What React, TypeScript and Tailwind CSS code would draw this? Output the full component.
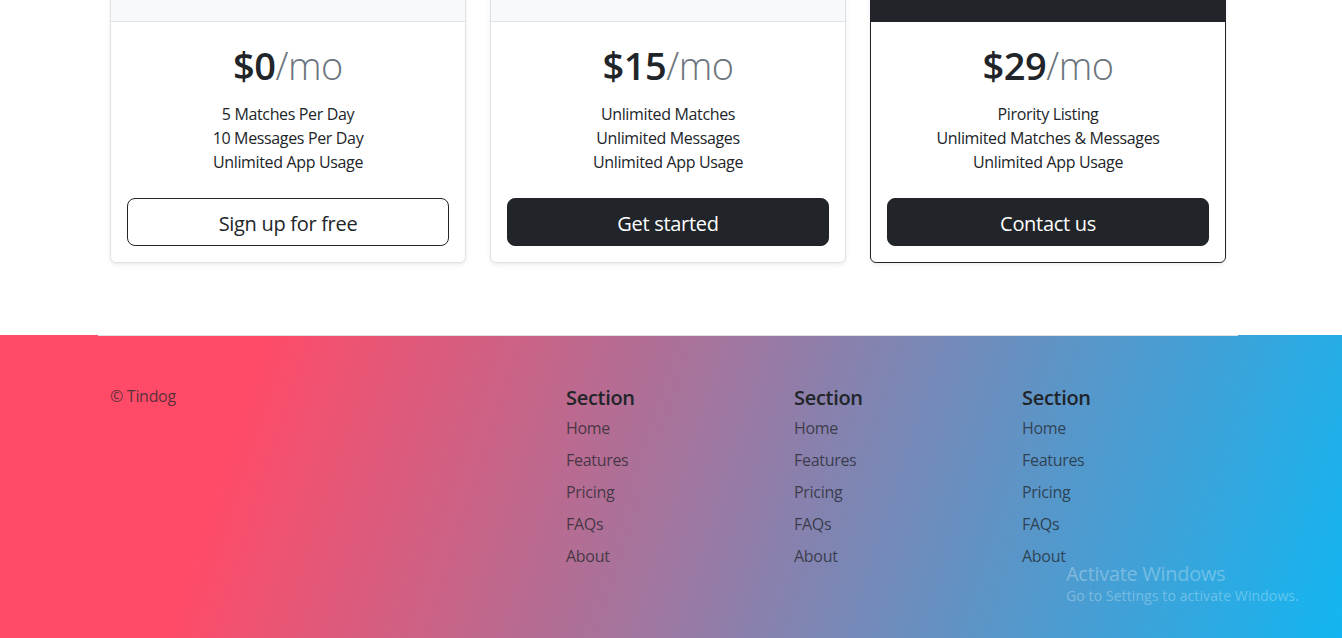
import React from "react";

type Plan = {
  price: string;
  features: string[];
  cta: string;
  variant: "outline" | "dark";
  featured?: boolean;
};

const plans: Plan[] = [
  {
    price: "$0",
    features: ["5 Matches Per Day", "10 Messages Per Day", "Unlimited App Usage"],
    cta: "Sign up for free",
    variant: "outline",
  },
  {
    price: "$15",
    features: ["Unlimited Matches", "Unlimited Messages", "Unlimited App Usage"],
    cta: "Get started",
    variant: "dark",
  },
  {
    price: "$29",
    features: ["Pirority Listing", "Unlimited Matches & Messages", "Unlimited App Usage"],
    cta: "Contact us",
    variant: "dark",
    featured: true,
  },
];

const PricingCard = ({ plan }: { plan: Plan }) => (
  <div
    className={`w-[356px] bg-white rounded-[6px] border overflow-hidden shadow-[0_2px_4px_rgba(0,0,0,0.075)] ${
      plan.featured ? "border-[#212529]" : "border-[#dee2e6]"
    }`}
  >
    <div
      className={`h-[61px] border-b ${
        plan.featured ? "bg-[#212529] border-[#212529]" : "bg-[#f8f9fa] border-[#dee2e6]"
      }`}
    />
    <div className="p-4 text-center">
      <h1 className="mt-[3px] text-[38px] leading-[48px] font-semibold tracking-[-0.5px] text-[#212529]">
        {plan.price}
        <span className="font-light text-[#6c757d]">/mo</span>
      </h1>
      <ul className="mt-[13px] mb-6 text-base leading-6 tracking-[-0.35px] text-[#212529]">
        {plan.features.map((f) => (
          <li key={f}>{f}</li>
        ))}
      </ul>
      <button
        className={`w-full h-12 pt-[3px] rounded-lg text-xl tracking-[-0.3px] border ${
          plan.variant === "outline"
            ? "bg-white border-[#212529] text-[#212529]"
            : "bg-[#212529] border-[#212529] text-white"
        }`}
      >
        {plan.cta}
      </button>
    </div>
  </div>
);

const FooterSection = () => (
  <div className="px-3">
    <h5 className="pt-[2px] text-xl leading-6 font-semibold tracking-[-0.3px] text-[#212529] mb-[6px]">
      Section
    </h5>
    <ul>
      {["Home", "Features", "Pricing", "FAQs", "About"].map((l) => (
        <li key={l} className="mb-2 leading-6 tracking-[-0.3px] text-[rgba(33,37,41,0.75)]">
          {l}
        </li>
      ))}
    </ul>
  </div>
);

export default function App() {
  return (
    <div className="relative min-h-screen overflow-hidden bg-white font-['Segoe_UI','Open_Sans','Noto_Sans',sans-serif] text-[#212529]">
      <div className="w-[1140px] ml-[98px] px-3 -mt-[40px]">
        <div className="flex gap-6">
          {plans.map((p) => (
            <PricingCard key={p.price} plan={p} />
          ))}
        </div>
      </div>

      <div className="mt-[72px] h-[400px] bg-[linear-gradient(108deg,#ff4b68_18%,#12b6f2_98%)]">
        <footer className="w-[1140px] ml-[98px] border-t border-[#dee2e6] py-12 grid grid-cols-5">
          <div className="px-3">
            <p className="leading-6 tracking-[-0.3px] text-[rgba(33,37,41,0.75)]">© Tindog</p>
          </div>
          <div className="px-3" />
          <FooterSection />
          <FooterSection />
          <FooterSection />
        </footer>
      </div>

      <div className="absolute left-[1066px] top-[561px] text-[rgba(255,255,255,0.3)] pointer-events-none">
        <div className="text-xl leading-[26px] tracking-[-0.3px]">Activate Windows</div>
        <div className="text-sm leading-[18px] tracking-[0.1px]">Go to Settings to activate Windows.</div>
      </div>
    </div>
  );
}
